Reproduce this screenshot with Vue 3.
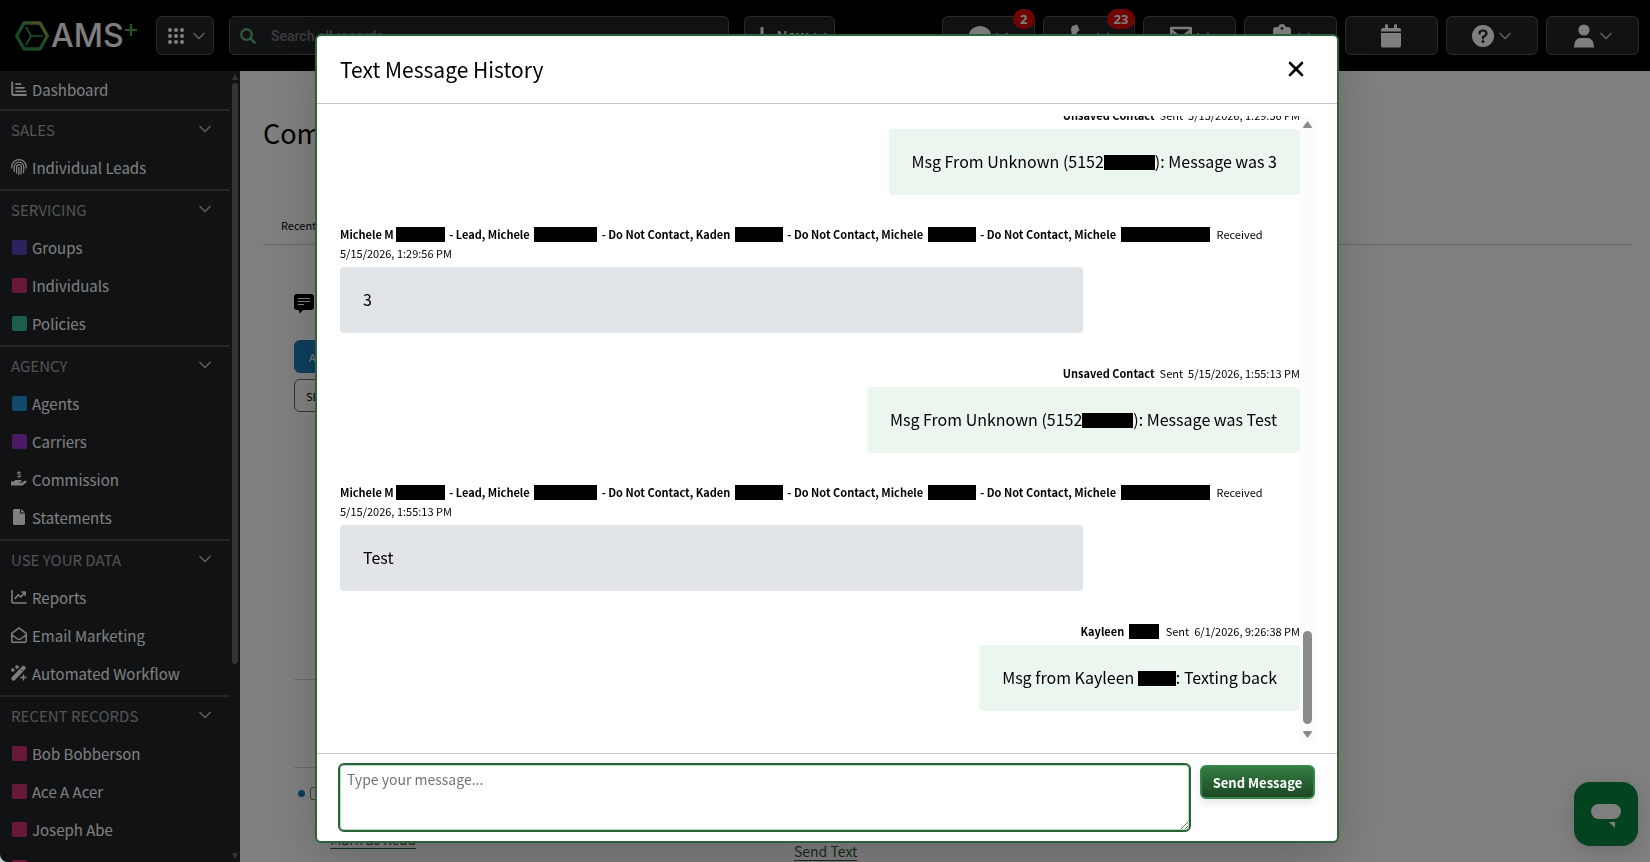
<template>
  <div class="app">
    <header class="topbar">
      <a class="logo" href="#" aria-label="AMS+">
        <svg width="34" height="30" viewBox="0 0 34 30" fill="none">
          <defs>
            <linearGradient id="hex" x1="0" y1="1" x2="1" y2="0">
              <stop offset="0" stop-color="#1f8a4a" />
              <stop offset="0.55" stop-color="#3c9a4c" />
              <stop offset="1" stop-color="#b0a83c" />
            </linearGradient>
          </defs>
          <path d="M9 2H25L32.300 15L25 28H9L1.700 15Z" stroke="url(#hex)" stroke-width="3.400" stroke-linejoin="round" />
          <path d="M11 6L16 15L11 24M16 15H28" stroke="#3c9a4c" stroke-width="1.700" />
        </svg>
        <span class="logo-text">AMS</span>
        <svg class="logo-plus" width="14" height="14" viewBox="0 0 14 14"><path d="M7 1V13M1 7H13" stroke="#4aa63c" stroke-width="2.200" /></svg>
      </a>
      <button class="bar-btn apps" aria-label="Apps">
        <svg width="16" height="16" viewBox="0 0 16 16" fill="#fff" v-html="icons.grid"></svg>
        <svg class="chev" width="12" height="8" viewBox="0 0 12 8" v-html="icons.chevron"></svg>
      </button>
      <div class="search">
        <svg width="16" height="16" viewBox="0 0 16 16" v-html="icons.search"></svg>
        <input type="text" placeholder="Search all records" aria-label="Search all records" />
      </div>
      <button class="bar-btn new">
        <svg width="18" height="18" viewBox="0 0 18 18"><path d="M9 1V17M1 9H17" stroke="#fff" stroke-width="3" stroke-linecap="round" /></svg>
        New
        <svg class="chev" width="12" height="8" viewBox="0 0 12 8" v-html="icons.chevron"></svg>
      </button>
      <nav class="bar-actions">
        <button v-for="a in actions" :key="a.icon" class="bar-btn" :aria-label="a.label">
          <svg width="22" height="24" viewBox="1 0 22 24" fill="#fff" v-html="icons[a.icon]"></svg>
          <svg v-if="a.menu" class="chev" width="12" height="8" viewBox="0 0 12 8" v-html="icons.chevron"></svg>
          <span v-if="a.count" class="badge">{{ a.count }}</span>
        </button>
      </nav>
    </header>

    <div class="body">
      <aside class="sidebar">
        <nav class="menu">
          <section v-for="(s, i) in sections" :key="i" class="menu-section">
            <button v-if="s.title" class="menu-title">
              {{ s.title }}
              <svg class="chev" width="12" height="8" viewBox="0 0 12 8" v-html="icons.chevron"></svg>
            </button>
            <a v-for="item in s.items" :key="item.name" class="menu-item" href="#">
              <svg v-if="item.icon" width="16" height="16" viewBox="0 0 16 16" v-html="icons[item.icon]"></svg>
              <span v-else class="swatch" :style="{ background: item.color }"></span>
              {{ item.name }}
            </a>
          </section>
        </nav>
        <div class="side-scroll">
          <svg width="6" height="6" viewBox="0 0 6 6"><path d="M3 0L6 6H0Z" fill="#6a6b70" /></svg>
          <div class="side-thumb"></div>
          <svg width="6" height="6" viewBox="0 0 6 6"><path d="M3 6L0 0H6Z" fill="#6a6b70" /></svg>
        </div>
      </aside>

      <main class="content">
        <h1>Com</h1>
        <div class="tabs"><a href="#">Recent</a></div>
        <div class="feed">
          <svg class="feed-icon" width="20" height="20" viewBox="0 0 20 20">
            <path d="M3 0H17A3 3 0 0 1 20 3V13A3 3 0 0 1 17 16H9L6 19.500L4.500 16H3A3 3 0 0 1 0 13V3A3 3 0 0 1 3 0Z" />
            <path d="M4 4.500H16M4 7.500H16M4 10.500H10" stroke="#fff" stroke-width="1.200" />
          </svg>
          <button class="feed-btn primary">A</button>
          <button class="feed-btn">SE</button>
          <div class="feed-space"></div>
          <div class="feed-row"></div>
          <div class="feed-row last">
            <span class="dot"></span>
            <input type="checkbox" aria-label="Select message" />
          </div>
          <div class="feed-links">
            <a href="#">Mark as Read</a>
            <a href="#" class="send-link">Send Text</a>
          </div>
        </div>
      </main>
    </div>

    <button class="chat" aria-label="Open chat">
      <svg width="30" height="24" viewBox="0 0 30 24" fill="#fff">
        <rect width="30" height="15" rx="7.500" />
        <path d="M18 18H24V24Z" />
      </svg>
    </button>

    <div class="overlay">
      <div class="modal" role="dialog" aria-labelledby="modal-title">
        <div class="modal-header">
          <h2 id="modal-title">Text Message History</h2>
          <button class="close" aria-label="Close">
            <svg width="16" height="16" viewBox="0 0 16 16"><path d="M2 2L14 14M14 2L2 14" stroke="#000" stroke-width="2.600" stroke-linecap="round" /></svg>
          </button>
        </div>

        <div class="modal-body">
          <div class="messages">
            <div v-for="(m, i) in messages" :key="i" class="message" :class="m.type">
              <div class="meta">
                <b><template v-for="(p, j) in m.from" :key="j"><span v-if="typeof p === 'number'" class="redact" :style="{ width: p + 'px' }"></span><template v-else>{{ p }}</template></template></b>
                <span class="status">{{ m.type === 'sent' ? 'Sent' : 'Received' }}</span>
                <time>{{ m.date }}</time>
              </div>
              <div class="bubble"><template v-for="(p, j) in m.text" :key="j"><span v-if="typeof p === 'number'" class="redact" :style="{ width: p + 'px' }"></span><template v-else>{{ p }}</template></template></div>
            </div>
          </div>
          <div class="scrollbar">
            <svg width="9" height="7" viewBox="0 0 9 7"><path d="M4.500 0L9 6Q9 7 8 7H1Q0 7 0 6Z" fill="#8b8b8b" /></svg>
            <div class="thumb"></div>
            <svg width="9" height="7" viewBox="0 0 9 7"><path d="M4.500 7L9 1Q9 0 8 0H1Q0 0 0 1Z" fill="#8b8b8b" /></svg>
          </div>
        </div>

        <form class="modal-footer" @submit.prevent="send">
          <textarea ref="box" v-model="draft" placeholder="Type your message..." aria-label="Message"></textarea>
          <button class="send">Send Message</button>
        </form>
      </div>
    </div>
  </div>
</template>

<script setup>
import { ref, onMounted } from 'vue'

const draft = ref('')
const box = ref(null)

onMounted(() => box.value.focus())

const icons = {
  chevron: '<path d="M1 1.500L6 6.500L11 1.500" fill="none" stroke="currentColor" stroke-width="1.700" stroke-linecap="round" stroke-linejoin="round"/>',
  grid: '<circle cx="2" cy="2" r="2"/><circle cx="8" cy="2" r="2"/><circle cx="14" cy="2" r="2"/><circle cx="2" cy="8" r="2"/><circle cx="8" cy="8" r="2"/><circle cx="14" cy="8" r="2"/><circle cx="2" cy="14" r="2"/><circle cx="8" cy="14" r="2"/><circle cx="14" cy="14" r="2"/>',
  search: '<circle cx="6.500" cy="6.500" r="5.200" fill="none" stroke="#5fae7a" stroke-width="2.400"/><path d="M10.500 10.500L14.600 14.600" stroke="#5fae7a" stroke-width="2.600" stroke-linecap="round"/>',
  comment: '<ellipse cx="12" cy="11" rx="11" ry="9"/><path d="M4 15L1 22L10 19Z"/>',
  phone: '<path d="M3 2L8 .5L10.500 6L7.500 9Q9 14 14 17L17 14L22.500 17L21.500 22Q20 23.500 18 23Q3 21 2 5Z"/>',
  mail: '<path d="M2.200 4H21.800V20H2.200Z" fill="none" stroke="#fff" stroke-width="2.400" stroke-linejoin="round"/><path d="M2 6L12 14L22 6" fill="none" stroke="#fff" stroke-width="2.400"/>',
  clipboard: '<path d="M12 0A4 4 0 0 0 8.300 3H6A3 3 0 0 0 3 6V21A3 3 0 0 0 6 24H18A3 3 0 0 0 21 21V6A3 3 0 0 0 18 3H15.700A4 4 0 0 0 12 0ZM12 3A1.400 1.400 0 1 1 12 5.800A1.400 1.400 0 1 1 12 3Z"/>',
  calendar: '<path d="M6 1.500A1.400 1.400 0 0 1 9 1.500V4H15V1.500A1.400 1.400 0 0 1 18 1.500V4H20A2 2 0 0 1 22 6V7.500H2V6A2 2 0 0 1 4 4H6ZM2 9H22V21.500A2 2 0 0 1 20 23.500H4A2 2 0 0 1 2 21.500Z"/>',
  help: '<circle cx="12" cy="12" r="11"/><path d="M8.500 9.500Q8.500 6.500 12 6.500Q15.500 6.500 15.500 9.500Q15.500 11.300 12 13V14.500" fill="none" stroke="#222428" stroke-width="2.200" stroke-linecap="round"/><circle cx="12" cy="17.600" r="1.500" fill="#222428"/>',
  user: '<circle cx="12" cy="6" r="5.600"/><path d="M2 23.500Q2 14 9 14H15Q22 14 22 23.500Z"/>',
  bars: '<path d="M1.200 1.500V12.300Q1.200 14 3 14H15.200M5 3.200H9.500M5 6.800H13M5 10.300H14.500" fill="none" stroke="#fff" stroke-width="1.800" stroke-linecap="round"/>',
  finger: '<path d="M.8 9V7.500A7.200 6.800 0 0 1 15.200 7.500V9M3.200 12.500V8A4.800 4.800 0 0 1 12.800 8Q12.900 11 12.400 13.500M5.600 14V8.300A2.400 2.600 0 0 1 10.400 8.300Q10.400 12 9.800 15M8 8.500Q8 12.500 7.600 15.500" fill="none" stroke="#fff" stroke-width="1.300" stroke-linecap="round"/>',
  hand: '<path d="M0 10.500H2.500L4.500 9H10Q11.500 10.500 9.500 11.500H7.500V12H10.500L14 9.400Q16.500 9.800 15.500 11.200L11.500 14.500H0Z" fill="#fff"/><path d="M9.800 2Q8 .9 6.800 1.700Q6.200 3 8 3.500Q10 4 9.300 5.300Q8 6.300 6.300 5.200M8 .3V1.300M8 5.600V6.800" fill="none" stroke="#fff" stroke-width="1.100"/>',
  file: '<path d="M3.500 0H9V4.500H14V14.500A1.500 1.500 0 0 1 12.500 16H3.500A1.500 1.500 0 0 1 2 14.500V1.500A1.500 1.500 0 0 1 3.500 0ZM10 0L14 3.600H10Z" fill="#fff"/>',
  line: '<path d="M1 1.500V12.300Q1 14 2.800 14H15.200M4.200 9.500L7.200 5.800L9.800 8L14 3.200M10.800 3H14.200V6.200" fill="none" stroke="#fff" stroke-width="1.600" stroke-linecap="round" stroke-linejoin="round"/>',
  envelope: '<path d="M.8 6.300L8 .9L15.200 6.300V14.200A1 1 0 0 1 14.200 15.200H1.800A1 1 0 0 1 .8 14.200ZM1 8L6.500 12Q8 13 9.500 12L15 8" fill="none" stroke="#fff" stroke-width="1.500" stroke-linejoin="round"/>',
  wand: '<path d="M2.500 13.500L12.500 3" stroke="#fff" stroke-width="4.200" stroke-linecap="round"/><path d="M10 4.200L11.800 6" stroke="#222428" stroke-width="1"/><path d="M6 0V4M4 2H8M1.800 3V7M0 5H3.600M12.500 9.500V15.500M9.500 12.500H15.500" stroke="#fff" stroke-width="1.400"/>'
}

const actions = [
  { icon: 'comment', label: 'Texts', menu: true, count: 2 },
  { icon: 'phone', label: 'Calls', menu: true, count: 23 },
  { icon: 'mail', label: 'Email', menu: true },
  { icon: 'clipboard', label: 'Tasks', menu: true },
  { icon: 'calendar', label: 'Calendar' },
  { icon: 'help', label: 'Help', menu: true },
  { icon: 'user', label: 'Account', menu: true }
]

const pink = '#cc3274'

const sections = [
  { items: [{ name: 'Dashboard', icon: 'bars' }] },
  { title: 'SALES', items: [{ name: 'Individual Leads', icon: 'finger' }] },
  {
    title: 'SERVICING',
    items: [
      { name: 'Groups', color: '#524ab8' },
      { name: 'Individuals', color: pink },
      { name: 'Policies', color: '#38bc9c' }
    ]
  },
  {
    title: 'AGENCY',
    items: [
      { name: 'Agents', color: '#2492d4' },
      { name: 'Carriers', color: '#9236c8' },
      { name: 'Commission', icon: 'hand' },
      { name: 'Statements', icon: 'file' }
    ]
  },
  {
    title: 'USE YOUR DATA',
    items: [
      { name: 'Reports', icon: 'line' },
      { name: 'Email Marketing', icon: 'envelope' },
      { name: 'Automated Workflow', icon: 'wand' }
    ]
  },
  {
    title: 'RECENT RECORDS',
    items: [
      { name: 'Bob Bobberson', color: pink },
      { name: 'Ace A Acer', color: pink },
      { name: 'Joseph Abe', color: pink },
      { name: '', color: pink }
    ]
  }
]

const leads = ['Michele M', 49, ' - Lead, Michele ', 63, ' - Do Not Contact, Kaden ', 48, ' - Do Not Contact, Michele ', 48, ' - Do Not Contact, Michele ', 89]

const messages = [
  { type: 'sent', from: ['Unsaved Contact'], date: '5/15/2026, 1:29:56 PM', text: ['Msg From Unknown (5152', 51, '): Message was 3'] },
  { type: 'received', from: leads, date: '5/15/2026, 1:29:56 PM', text: ['3'] },
  { type: 'sent', from: ['Unsaved Contact'], date: '5/15/2026, 1:55:13 PM', text: ['Msg From Unknown (5152', 51, '): Message was Test'] },
  { type: 'received', from: leads, date: '5/15/2026, 1:55:13 PM', text: ['Test'] },
  { type: 'sent', from: ['Kayleen ', 30], date: '6/1/2026, 9:26:38 PM', text: ['Msg from Kayleen ', 38, ': Texting back'] }
]

function send() {
  draft.value = ''
}
</script>

<style>
body {
  margin: 0;
  background: #c8ccd0;
}
</style>

<style scoped>
* {
  box-sizing: border-box;
}

.app {
  height: 100vh;
  display: flex;
  flex-direction: column;
  overflow: hidden;
  border-bottom-left-radius: 8px;
  font-family: "Noto Sans CJK SC", "Noto Sans", sans-serif;
  font-size: 16px;
  color: #000;
}

button,
input,
textarea {
  font-family: inherit;
}

.topbar {
  height: 71px;
  flex: none;
  display: flex;
  align-items: flex-start;
  padding: 16px 11px 0 15px;
  background: #000;
}

.logo {
  display: flex;
  align-items: center;
  width: 141px;
  height: 40px;
  color: #fff;
  text-decoration: none;
}

.logo-text {
  margin-left: 2px;
  font: 500 32px/40px Inter, sans-serif;
}

.logo-plus {
  margin-bottom: 12px;
}

.bar-btn {
  position: relative;
  display: flex;
  align-items: center;
  justify-content: center;
  gap: 6px;
  height: 39px;
  padding: 0;
  border: 1px solid #56575c;
  border-radius: 6px;
  background: #222428;
  color: #fff;
  font-size: 15px;
  font-weight: 500;
}

.chev {
  color: #b4b4b4;
}

.apps {
  width: 58px;
  padding-left: 2px;
  gap: 9px;
}

.search {
  display: flex;
  align-items: center;
  gap: 15px;
  width: 500px;
  height: 39px;
  margin: 0 15px;
  padding: 0 10px;
  border: 1px solid #56575c;
  border-radius: 6px;
  background: #222428;
}

.search input {
  flex: 1;
  border: 0;
  background: none;
  font: 500 14px Roboto, sans-serif;
  padding: 0;
}

.search input::placeholder {
  color: #77787c;
}

.new {
  width: 91px;
}

.bar-actions {
  display: flex;
  gap: 8px;
  width: 697px;
  margin-left: auto;
}

.bar-actions .bar-btn {
  flex: 1;
  gap: 5px;
}

.badge {
  position: absolute;
  top: -8px;
  right: -1px;
  min-width: 22px;
  height: 20px;
  padding: 0 7px;
  border-radius: 10px;
  background: #e00a0a;
  color: #fff;
  font: bold 13px/20px "Open Sans", sans-serif;
}

.body {
  flex: 1;
  min-height: 0;
  display: flex;
}

.sidebar {
  width: 240px;
  flex: none;
  display: flex;
  background: #222428;
  overflow: hidden;
}

.menu {
  flex: 1;
}

.menu-section {
  padding-bottom: 2px;
}

.menu-section:first-child {
  padding-bottom: 0;
}

.menu-section + .menu-section {
  border-top: 2px solid #4a4b50;
}

.menu-title,
.menu-item {
  display: flex;
  align-items: center;
  width: 100%;
  height: 38px;
  padding: 0 19px 2px 11px;
  border: 0;
  background: none;
  font-size: 15px;
}

.menu-title {
  justify-content: space-between;
  color: #a8a8a8;
}

.menu-item {
  gap: 5px;
  color: #fff;
  text-decoration: none;
}

.swatch {
  width: 15px;
  height: 15px;
  margin-left: 1px;
  border-radius: 2px;
}

.side-scroll {
  display: flex;
  flex-direction: column;
  align-items: center;
  width: 10px;
  padding: 3px 2px;
}

.side-thumb {
  width: 6px;
  height: 74%;
  margin: 3px 0 auto;
  border-radius: 3px;
  background: #67686d;
}

.content {
  flex: 1;
  padding: 42px 18px 0 23px;
  background: #fff;
}

h1 {
  margin: 0;
  font-size: 27px;
  font-weight: 400;
  line-height: 40px;
}

.tabs {
  margin-top: 62px;
  padding: 0 18px 9px;
  border-bottom: 1px solid #c8c8c8;
  font-size: 11px;
  line-height: 20px;
}

.tabs a {
  color: #000;
  text-decoration: none;
}

.feed {
  display: flex;
  flex-direction: column;
  align-items: flex-start;
  max-width: 1000px;
  padding: 49px 0 0 31px;
}

.feed-icon {
  margin-bottom: 26px;
}

.feed-btn {
  height: 33px;
  margin-bottom: 6px;
  padding: 0 11px;
  border: 1px solid #666;
  border-radius: 6px;
  background: #fff;
  font-size: 11px;
}

.primary {
  padding: 0 14px;
  border-color: #1c7cb8;
  background: #1c7cb8;
  color: #fff;
}

.feed-space {
  height: 261px;
}

.feed-row {
  display: flex;
  align-items: center;
  gap: 5px;
  width: 100%;
  height: 88px;
  border-top: 1px solid #d4d4d4;
}

.feed-row.last {
  height: 52px;
  padding-left: 4px;
}

.dot {
  width: 7px;
  height: 7px;
  border-radius: 50%;
  background: #1c7cb8;
}

.feed-row input {
  width: 13px;
  height: 13px;
  margin: 0;
}

.feed-links {
  display: flex;
  gap: 378px;
  padding: 8px 0 0 36px;
  font-size: 14px;
  line-height: 24px;
}

.feed-links a {
  color: #285c34;
  text-underline-offset: 3px;
}

.send-link {
  padding-top: 12px;
}

.chat {
  position: fixed;
  right: 12px;
  bottom: 16px;
  display: flex;
  align-items: center;
  justify-content: center;
  width: 64px;
  height: 64px;
  padding: 4px 0 0;
  border: 0;
  border-radius: 16px;
  background: #08863e;
  box-shadow: 0 4px 20px rgba(0, 0, 60, 0.15);
}

.overlay {
  position: fixed;
  inset: 0;
  display: flex;
  justify-content: center;
  padding: 34px 0 19px 4px;
  border-bottom-left-radius: 8px;
  background: rgba(0, 0, 0, 0.5);
}

.modal {
  display: flex;
  flex-direction: column;
  width: 100%;
  max-width: 1024px;
  border: 2px solid #2d6139;
  border-radius: 6px;
  background: #fff;
  box-shadow: 0 16px 48px rgba(0, 0, 0, 0.18);
}

.modal-header {
  display: flex;
  align-items: center;
  justify-content: space-between;
  height: 68px;
  padding: 0 33px 2px 23px;
  border-bottom: 1px solid #c6c6c6;
}

h2 {
  margin: 0;
  font-size: 21px;
  font-weight: 400;
}

.close {
  display: flex;
  padding: 0;
  border: 0;
  background: none;
}

.modal-body {
  flex: 1;
  min-height: 0;
  display: flex;
  margin: 12px 22px 12px 23px;
}

.messages {
  flex: 1;
  display: flex;
  flex-direction: column;
  justify-content: flex-end;
  overflow: hidden;
}

.message {
  display: flex;
  flex-direction: column;
  align-items: flex-start;
  flex: none;
  margin-bottom: 30px;
}

.sent {
  align-items: flex-end;
}

.meta {
  padding-bottom: 4px;
  font-size: 11px;
  line-height: 19px;
}

.sent .meta {
  padding-top: 1px;
}

.meta b,
.status {
  margin-right: 5px;
}

.meta time {
  display: inline-block;
}

.meta .redact {
  margin: 0 2px;
}

.bubble {
  padding: 20px 23px 22px;
  border-radius: 4px;
  background: #ebf6ee;
  line-height: 24px;
}

.received .bubble {
  width: calc(75% + 23px);
  background: #e2e5e8;
}

.redact {
  display: inline-block;
  height: 15px;
  background: #000;
  vertical-align: -3px;
}

.bubble .redact {
  vertical-align: -2px;
}

.scrollbar {
  display: flex;
  flex-direction: column;
  align-items: center;
  width: 15px;
  padding: 5px 0 3px;
  background: #fcfcfc;
}

.thumb {
  width: 9px;
  height: 15%;
  margin: auto 0 7px;
  border-radius: 5px;
  background: #8b8b8b;
}

.modal-footer {
  display: flex;
  align-items: flex-start;
  gap: 9px;
  padding: 9px 22px 9px 21px;
  border-top: 1px solid #c4c6ca;
}

textarea {
  flex: 1;
  height: 69px;
  padding: 3px 7px;
  border: 2px solid #2d6139;
  border-radius: 6px;
  outline: none;
  box-shadow: inset 0 0 0 1px #b4dcc0;
  font-size: 14px;
  line-height: 22px;
}

textarea::placeholder {
  color: #747474;
}

.send {
  width: 115px;
  height: 34px;
  margin-top: 2px;
  padding: 0;
  border: 2px solid #37854a;
  border-radius: 6px;
  background: linear-gradient(#347c42, #1c4824);
  color: #fff;
  box-shadow: 0 4px 8px rgba(0, 0, 0, 0.1);
  font-size: 13px;
  font-weight: 600;
}
</style>
